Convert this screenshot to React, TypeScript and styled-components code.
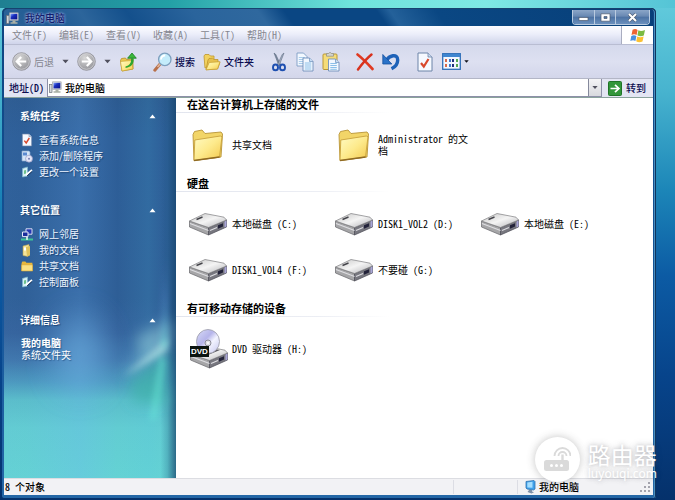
import React from "react";
import styled, { createGlobalStyle } from "styled-components";

const GlobalStyle = createGlobalStyle`
  * { box-sizing: border-box; }
  html, body { margin: 0; padding: 0; }
  body, button, input {
    font-family: "Noto Sans CJK SC", "Liberation Sans", sans-serif;
    font-size: 10px;
    line-height: 12px;
    color: #000;
  }
  button { border: 0; padding: 0; background: none; }
  svg { display: block; flex: none; }
  h1, h2, ul, p { margin: 0; padding: 0; font-size: inherit; list-style: none; }
`;

/* ---------- window frame ---------- */

const Desktop = styled.div`
  position: relative;
  min-height: 100vh;
  display: flex;
  padding: 8px 19px 2px 2px;
  background:
    linear-gradient(90deg, #1f7f92 0, #23a0a6 25%, #6fe3dc 52%, #7fe8e4 72%, #55c4d6 100%) 0 0 / 100% 8px no-repeat,
    linear-gradient(180deg, #62cbdc 0, #48b4cf 18%, #1c86b8 38%, #0c5ba4 55%, #07448b 75%, #05316b 100%);
`;

const WindowFrame = styled.div`
  flex: 1;
  min-width: 0;
  display: flex;
  flex-direction: column;
  padding: 0 3px 3px 2px;
  border-radius: 5px 5px 2px 2px;
  background: linear-gradient(180deg, #0e4480 0, #15559a 60%, #2467a6 100%);
  box-shadow: inset -1px 0 0 #10355f, inset 0 1px 0 #173a5e, inset -2px 0 0 #4a8fc0;
`;

const TitleBar = styled.header`
  height: 18px;
  display: flex;
  align-items: center;
  gap: 6px;
  padding: 1px 3px 0 2px;
  border-radius: 4px 4px 0 0;
  border-top: 1px solid #17426f;
  background: linear-gradient(
    55deg,
    #2d6397 0,
    #1f5a94 8%,
    #2c659b 13%,
    #14508c 20%,
    #2a649c 30%,
    #2f689e 40%,
    #0a4683 44%,
    #0a4683 58%,
    #24619a 60%,
    #0a4783 67%,
    #073f79 100%
  );
`;

const Title = styled.h1`
  flex: 1;
  font-weight: 500;
  color: #101c6c;
  text-shadow: 0 0 2px #a9b8e6, 0 0 3px #8fa6dc;
`;

const Controls = styled.div`
  align-self: flex-start;
  display: flex;
  border: 1px solid #b9cbe0;
  border-top: 0;
  border-radius: 0 0 4px 4px;
  overflow: hidden;
`;

const ControlButton = styled.button<{ $wide?: boolean }>`
  width: ${(p) => (p.$wide ? 34 : 21)}px;
  height: 14px;
  display: flex;
  align-items: center;
  justify-content: center;
  background: linear-gradient(180deg, #8ba6c8 0, #6888b2 45%, #4c72a3 50%, #6b90bd 100%);
  & + & { border-left: 1px solid #b9cbe0; }
`;

/* ---------- bars ---------- */

const MenuBar = styled.nav`
  height: 19px;
  display: flex;
  align-items: stretch;
  justify-content: space-between;
  border-bottom: 1px solid #b9bdd2;
  background: linear-gradient(180deg, #fcfcff 0, #eceefa 45%, #cfd4ea 100%);
`;

const MenuItems = styled.div`
  display: flex;
  padding-left: 2px;
`;

const MenuButton = styled.button`
  padding: 0 6px;
  color: #85868f;
`;

const LogoBox = styled.div`
  width: 32px;
  display: flex;
  align-items: center;
  justify-content: center;
  border-left: 1px solid #a9adc0;
  background: #fff;
`;

const Toolbar = styled.div`
  height: 34px;
  display: flex;
  align-items: center;
  gap: 16px;
  padding-left: 8px;
  border-bottom: 1px solid #b3b6c6;
  background: linear-gradient(180deg, #d5d9ec 0, #dde0f1 50%, #d3d6ea 100%);
`;

const ToolGroup = styled.div`
  display: flex;
  align-items: center;
  gap: 8px;
`;

const ToolButton = styled.button<{ $muted?: boolean }>`
  display: flex;
  align-items: center;
  gap: 3px;
  color: ${(p) => (p.$muted ? "#85868f" : "#0c0c50")};
  font-weight: ${(p) => (p.$muted ? 400 : 500)};
`;

const AddressBar = styled.form`
  height: 18px;
  display: flex;
  align-items: center;
  padding: 0 7px 0 5px;
  background: #e3e5f3;
`;

const AddressLabel = styled.label`
  margin-right: 3px;
  color: #0c0c50;
  font-weight: 500;
`;

const AddressBox = styled.div`
  flex: 1;
  align-self: stretch;
  min-width: 0;
  display: flex;
  align-items: center;
  gap: 3px;
  padding-left: 1px;
  border: 1px solid #8d90a8;
  border-width: 0 1px 1px 1px;
  background: #fff;
`;

const AddressInput = styled.input`
  flex: 1;
  min-width: 0;
  height: 16px;
  padding: 0;
  border: 0;
  outline: 0;
  background: transparent;
  font-weight: 500;
`;

const DropButton = styled.button`
  align-self: stretch;
  width: 13px;
  display: flex;
  align-items: center;
  justify-content: center;
  border-left: 1px solid #85899c;
  background: linear-gradient(180deg, #f4f4f6, #d8d9de);
`;

const GoButton = styled.button`
  display: flex;
  align-items: center;
  gap: 4px;
  margin-left: 6px;
  color: #0c0c50;
  font-weight: 500;
`;

/* ---------- body ---------- */

const Body = styled.div`
  flex: 1;
  display: flex;
  border-top: 1px solid #8aa29c;
  background: #fff;
`;

const Sidebar = styled.aside`
  position: relative;
  isolation: isolate;
  overflow: hidden;
  width: 172px;
  flex: none;
  padding: 8px 20px 20px 16px;
  color: #fff;
  background:
    linear-gradient(90deg, transparent 0, transparent 91%, rgba(30, 90, 130, 0.25) 95%, rgba(24, 70, 110, 0.75) 100%),
    linear-gradient(90deg, rgba(120, 180, 240, 0.04) 0, rgba(120, 180, 240, 0.02) 12%, rgba(110, 180, 250, 0.2) 44%, rgba(110, 180, 250, 0) 66%, rgba(80, 200, 230, 0.12) 84%, transparent 94%),
    linear-gradient(180deg, #2c5a90 0, #2d5e98 40px, #2e5e96 200px, #34629c 235px, #3f76ac 262px, #4b98be 284px, #5abdca 302px, #62ccd2 330px, #64d2d4 100%);
`;

const Aurora = styled.svg`
  position: absolute;
  z-index: -1;
  left: 0;
  top: 0;
`;

const TaskSection = styled.section`
  margin-bottom: 20px;
`;

const TaskHeading = styled.h2`
  height: 20px;
  display: flex;
  align-items: center;
  justify-content: space-between;
  font-weight: 700;
  text-shadow: 1px 1px 1px #1c4474;
`;

const TaskList = styled.ul`
  padding-top: 6px;
`;

const TaskLink = styled.a`
  height: 16px;
  display: flex;
  align-items: center;
  gap: 6px;
  padding-left: 1px;
  color: #eef5ff;
  text-decoration: none;
  text-shadow: 1px 1px 1px #1c4474;
`;

const Details = styled.div`
  padding: 7px 0 0 1px;
  text-shadow: 1px 1px 1px #2a5a8c;
`;

const DetailName = styled.p`
  font-weight: 700;
`;

const Content = styled.main`
  flex: 1;
  min-width: 0;
`;

const GroupHeading = styled.h2`
  height: 15px;
  padding-left: 11px;
  border-bottom: 1px solid;
  border-image: linear-gradient(90deg, #e2e5ee 0, #eceef4 30%, #fff 45%) 1;
  font-size: 11px;
  line-height: 12px;
  font-weight: 700;
`;

const ItemGrid = styled.div`
  display: grid;
  grid-template-columns: repeat(auto-fill, 146px);
  grid-auto-rows: 46px;
  padding: 9px 0 9px 12px;
`;

const Item = styled.button`
  display: flex;
  align-items: center;
  gap: 4px;
  text-align: left;
`;

const ItemIcon = styled.span`
  width: 40px;
  flex: none;
`;

const ItemLabel = styled.span`
  max-width: 92px;
`;

const Latin = styled.span`
  font-feature-settings: "hwid";
  white-space: pre;
`;

const StatusBar = styled.footer`
  height: 17px;
  display: flex;
  align-items: center;
  background: #f2f2f5;
  border-top: 1px solid #dcdde2;
`;

const StatusCell = styled.div<{ $width?: number }>`
  ${(p) => (p.$width ? `width: ${p.$width}px;` : "flex: 1;")}
  height: 14px;
  display: flex;
  align-items: center;
  gap: 3px;
  padding-left: ${(p) => (p.$width ? 6 : 1)}px;
  font-weight: 500;
  & + & { border-left: 1px solid #dcdde4; }
`;

const Grip = styled.span`
  margin: 0 3px 0 auto;
`;

const Watermark = styled.div`
  position: absolute;
  right: 18px;
  bottom: 18px;
  display: flex;
  align-items: center;
  gap: 8px;
  color: #fff;
  pointer-events: none;
  text-shadow: 0 0 4px rgba(70, 70, 80, 0.35), 0 0 9px rgba(70, 70, 80, 0.2);
`;

const Badge = styled.div`
  width: 45px;
  height: 45px;
  display: flex;
  align-items: center;
  justify-content: center;
  border-radius: 50%;
  background: #fff;
  box-shadow: 0 0 9px rgba(60, 60, 60, 0.3);
`;

const BrandName = styled.div`
  font-size: 23px;
  line-height: 28px;
`;

const BrandSite = styled.div`
  font-family: "Noto Sans", sans-serif;
  font-size: 12px;
  line-height: 12px;
`;

/* ---------- icons ---------- */

const SharedGradients = () => (
  <svg width="0" height="0" aria-hidden="true">
    <defs>
      <linearGradient id="folder" x1="0" y1="0" x2="1" y2="1">
        <stop offset="0" stopColor="#fffbc4" />
        <stop offset="0.5" stopColor="#fdea8c" />
        <stop offset="1" stopColor="#f3c84c" />
      </linearGradient>
      <linearGradient id="metal" x1="0" y1="0" x2="1" y2="1">
        <stop offset="0" stopColor="#c4c4c4" />
        <stop offset="0.5" stopColor="#f4f4f4" />
        <stop offset="1" stopColor="#b4b4b8" />
      </linearGradient>
      <radialGradient id="orb" cx="0.4" cy="0.3" r="0.8">
        <stop offset="0" stopColor="#d8d8d8" />
        <stop offset="1" stopColor="#8c8c92" />
      </radialGradient>
      <linearGradient id="disc" x1="0" y1="0" x2="1" y2="1">
        <stop offset="0" stopColor="#d9dcf6" />
        <stop offset="0.4" stopColor="#b5b4ea" />
        <stop offset="0.6" stopColor="#f3f4ff" />
        <stop offset="1" stopColor="#c4c6ee" />
      </linearGradient>
      <linearGradient id="screen" x1="0" y1="0" x2="1" y2="1">
        <stop offset="0" stopColor="#7fa4ff" />
        <stop offset="0.4" stopColor="#1a2fc0" />
        <stop offset="1" stopColor="#080c80" />
      </linearGradient>
    </defs>
  </svg>
);

const ComputerIcon = () => (
  <svg width="13" height="13" viewBox="0 0 13 13">
    <rect x="0.5" y="3.5" width="2.5" height="8" fill="#d4d8dc" stroke="#6a7078" strokeWidth="0.7" />
    <path d="M3.5 0.8h8.7v7.6H3.5z" fill="#dde0e4" stroke="#9ca2aa" strokeWidth="0.7" />
    <path d="M4.5 1.8h6.8v5.6H4.5z" fill="url(#screen)" />
    <path d="M6.5 8.6h3v1.6h2v1.6h-7v-1.6h2z" fill="#a9b0a6" />
  </svg>
);

const MyPlaceIcon = () => (
  <svg width="12" height="14" viewBox="0 0 12 14">
    <path d="M2 1.5l8-1 1 1v7.5l-1.5 1L3 9 2 8z" fill="#3fa0ea" stroke="#3172ae" strokeWidth="0.8" />
    <path d="M3.3 2.5l5.2-.7v6L3.3 7.6z" fill="#a5deff" />
    <path d="M5 10h3v1.5l2 .8-2.5 1.2L3.5 12z" fill="#7d90a8" />
  </svg>
);

const FlagIcon = () => (
  <svg width="16" height="15" viewBox="0 0 16 15">
    <path d="M2.6 1.8C4.5.7 6 .8 7.6 1.9L6.6 7C5 6 3.400 6 1.500 7z" fill="#ee6432" />
    <path d="M8.400 2.300c1.700 1 3.800 1 6.600-.3l-1.200 5.400c-2.300 1-4.400 1-6.400-.1z" fill="#7cbb42" />
    <path d="M1.300 7.900c1.900-1 3.500-1 5.100 0l-1 5C3.800 12 2.200 12 .3 13z" fill="#4a8fe0" />
    <path d="M7.200 8.400c2 1 4 1 6.400.1l-1.100 4.900c-2.300 1-4.400 1-6.300-.2z" fill="#fbc132" />
  </svg>
);

const OrbIcon = ({ forward }: { forward?: boolean }) => (
  <svg width="19" height="19" viewBox="0 0 19 19">
    <circle cx="9.500" cy="9.500" r="8.800" fill="url(#orb)" stroke="#8f8f96" strokeWidth="0.8" />
    <circle cx="9.500" cy="9.500" r="7.800" fill="none" stroke="#d8d8dc" strokeWidth="0.7" />
    <path
      d={forward ? "M4.800 9.500h9M9.800 5l4.400 4.500-4.400 4.500" : "M14.200 9.500h-9M9.200 5L4.800 9.500 9.200 14"}
      fill="none"
      stroke="#fff"
      strokeWidth="2.200"
    />
  </svg>
);

const Caret = ({ size = 7, color = "#50505e" }: { size?: number; color?: string }) => (
  <svg width={size} height="5" viewBox="0 0 8 5">
    <path d="M0.500 0.500h7L4 4.500z" fill={color} />
  </svg>
);

const FolderUpIcon = () => (
  <svg width="18" height="20" viewBox="0 0 18 20">
    <path d="M1.500 8.500l1-2 4-.5 1 1.500 6.500-.6V17l-11 2z" fill="#e9c750" stroke="#b68f24" strokeWidth="0.8" />
    <path d="M1.500 9.500l11-1L14 17 3 19z" fill="url(#folder)" stroke="#c49c2c" strokeWidth="0.6" />
    <path d="M6.500 14.500c4-1 6-3.500 5.500-8H14.600c.6 5-2 8.600-8 9.500z" fill="#2fa52f" />
    <path d="M8.600 6.200L13 1l4.300 5.200z" fill="#3bb83b" stroke="#167f1d" strokeWidth="0.8" />
  </svg>
);

const SearchIcon = () => (
  <svg width="19" height="20" viewBox="0 0 19 20">
    <path d="M7.500 11.500L1.800 18.200" stroke="#b8704a" strokeWidth="3" strokeLinecap="round" />
    <path d="M7.500 11.500L4.500 15" stroke="#e0b49a" strokeWidth="1.600" />
    <circle cx="11.800" cy="7.400" r="6.200" fill="#c4ecfb" stroke="#7d9fbe" strokeWidth="1.300" />
    <path d="M8 7.500c0-2.400 2-4.200 4.200-4" fill="none" stroke="#fff" strokeWidth="1.800" />
  </svg>
);

const FoldersIcon = () => (
  <svg width="18" height="18" viewBox="0 0 18 18">
    <path d="M1 3l1-1.500h4L7.500 3H11v9L2 15z" fill="#f2d260" stroke="#be962c" strokeWidth="0.800" />
    <path d="M5 7l1-1.500 3.500-.3L11 6.500h4V9l2 .3L14.500 16 3 16.800z" fill="#e6c04e" stroke="#be962c" strokeWidth="0.800" />
    <path d="M3 16.800L6.200 9.500 17 8.700 14.500 16z" fill="url(#folder)" stroke="#c89f30" strokeWidth="0.700" />
  </svg>
);

const CutIcon = () => (
  <svg width="18" height="20" viewBox="0 0 18 20">
    <path d="M4 1l1.800 1.500 4.700 10-1.700 1z" fill="#7c8ba0" stroke="#4e5c72" strokeWidth="0.500" />
    <path d="M14 1l-1.800 1.500-4.700 10 1.700 1z" fill="#a6b2c4" stroke="#4e5c72" strokeWidth="0.500" />
    <ellipse cx="5.500" cy="15.400" rx="2.500" ry="2.900" fill="none" stroke="#1d4fb0" strokeWidth="1.900" />
    <ellipse cx="12.500" cy="15.400" rx="2.500" ry="2.900" fill="none" stroke="#1d4fb0" strokeWidth="1.900" />
  </svg>
);

const CopyIcon = () => (
  <svg width="18" height="20" viewBox="0 0 18 20">
    <path d="M1 1h6.500L11 4.500V14H1z" fill="#f2f8ff" stroke="#7d9cc4" strokeWidth="0.900" />
    <path d="M2.800 5.500h6M2.800 7.500h6M2.800 9.500h6M2.800 11.500h6" stroke="#a9cdea" />
    <path d="M7 6h6.500L17 9.500V19H7z" fill="#f2f8ff" stroke="#6f8fba" strokeWidth="0.900" />
    <path d="M13.500 6v3.500H17" fill="#c4dcf4" stroke="#6f8fba" strokeWidth="0.700" />
    <path d="M8.800 11h6.500M8.800 13h6.500M8.800 15h6.500M8.800 17h6.500" stroke="#8cc0e8" />
  </svg>
);

const PasteIcon = () => (
  <svg width="18" height="20" viewBox="0 0 18 20">
    <rect x="1" y="2" width="14" height="15.500" rx="1" fill="#f5dc78" stroke="#b99736" />
    <path d="M4.500 1.500h2L8 .3l1.500 1.200h2v2.700h-7z" fill="#d4d4d0" stroke="#8c8c80" strokeWidth="0.700" />
    <path d="M6.500 7h7L17 10.500V19H6.500z" fill="#f2f8ff" stroke="#6f8fba" strokeWidth="0.900" />
    <path d="M13.500 7v3.500H17" fill="#c4dcf4" stroke="#6f8fba" strokeWidth="0.700" />
    <path d="M8.300 11.500h6.500M8.300 13.500h6.500M8.300 15.500h6.500M8.300 17.300h6.500" stroke="#8cc0e8" />
  </svg>
);

const DeleteIcon = () => (
  <svg width="18" height="18" viewBox="0 0 18 18">
    <path d="M1.500 1.500C6 5 11 10 16.500 16" fill="none" stroke="#e03a22" strokeWidth="2.600" strokeLinecap="round" />
    <path d="M15.500 1.500C10 6 6 11 2 16.500" fill="none" stroke="#d8321e" strokeWidth="2.400" strokeLinecap="round" />
  </svg>
);

const UndoIcon = () => (
  <svg width="18" height="19" viewBox="0 0 18 19">
    <path d="M4.500 8.500C7 3.500 15.500 1 15.700 8c0 4-2.500 7-6.200 8.800" fill="none" stroke="#1e62b8" strokeWidth="3.400" />
    <path d="M0.800 2.500V12h9z" fill="#2a72c8" stroke="#15509e" strokeWidth="0.800" />
  </svg>
);

const CheckPageIcon = ({ size = 18 }: { size?: number }) => (
  <svg width={size} height={size + 2} viewBox="0 0 18 20">
    <path d="M2 1h10l4 4v14H2z" fill="#f6f9ff" stroke="#6d84a8" />
    <path d="M12 1v4h4" fill="#cddcf0" stroke="#6d84a8" strokeWidth="0.800" />
    <path d="M5 11l2.800 3.500L12.500 7" fill="none" stroke="#d8482c" strokeWidth="2.200" />
  </svg>
);

const ViewsIcon = () => (
  <svg width="19" height="17" viewBox="0 0 19 17">
    <rect x="0.700" y="0.700" width="17.600" height="15.600" fill="#f2f7ff" stroke="#2f6fb8" strokeWidth="1.300" />
    <path d="M1 1h17v3H1z" fill="#3f86d0" />
    <path d="M3 6h2v3H3zM3 11h2v3H3z" fill="#d86a4a" />
    <path d="M7 6h2v3H7zM7 11h2v3H7z" fill="#3c78c8" />
    <path d="M10 6h2v3h-2zM10 11h2v3h-2z" fill="#20307c" />
    <path d="M14 6h2v3h-2zM14 11h2v3h-2z" fill="#54a852" />
  </svg>
);

const GoIcon = () => (
  <svg width="14" height="15" viewBox="0 0 14 15">
    <rect x="0.500" y="0.500" width="13" height="14" rx="1" fill="#32963a" stroke="#1f7428" />
    <path d="M2.500 7.500h8M7 3.800l3.900 3.700L7 11.200" fill="none" stroke="#fff" strokeWidth="1.700" />
  </svg>
);

const CollapseIcon = () => (
  <svg width="7" height="5" viewBox="0 0 7 5">
    <path d="M0.500 4.200L3.500 0.600l3 3.600z" fill="#fff" />
  </svg>
);

const ProgramsIcon = () => (
  <svg width="12" height="13" viewBox="0 0 12 13">
    <path d="M1 1h7l1 1v9H1z" fill="#d6e6f8" stroke="#86a4cc" strokeWidth="0.700" />
    <path d="M2 2.500h4v3H2z" fill="#5c8ad0" />
    <circle cx="8" cy="8.700" r="3.500" fill="#e4e6f8" stroke="#9a9cc4" strokeWidth="0.700" />
    <circle cx="8" cy="8.700" r="1" fill="#7c80b0" />
  </svg>
);

const SettingIcon = () => (
  <svg width="12" height="12" viewBox="0 0 12 12">
    <path d="M1.500 2.500l5-1.500v9l-5 1z" fill="#d4eef4" stroke="#7cb6cc" strokeWidth="0.700" />
    <path d="M3 4.500l2-.5v3.500l-2 .5z" fill="#6cc08c" />
    <path d="M5 9l6-5" stroke="#fff" strokeWidth="1.700" />
    <path d="M6 10l5-4.500" stroke="#1c3454" strokeWidth="0.900" />
  </svg>
);

const NetworkIcon = () => (
  <svg width="12" height="13" viewBox="0 0 12 13">
    <path d="M5 .8h6v5.400H5z" fill="#2438b4" stroke="#d8dcf0" />
    <path d="M1.500 4h5.500v4.600H1.500z" fill="#1a2c9c" stroke="#e4e8f8" />
    <path d="M0 11.500h12" stroke="#3ec498" strokeWidth="2" />
    <path d="M5 9h2v3H5z" fill="#bde6d8" />
  </svg>
);

const DocumentsIcon = () => (
  <svg width="12" height="13" viewBox="0 0 12 13">
    <path d="M2 2l6-1.500V10l-1 2.500-5-1z" fill="#f4e49a" stroke="#bca350" strokeWidth="0.600" />
    <path d="M5 3l4-1v9.500l-3 .8z" fill="#e0c25c" />
    <path d="M3 3.500h2v3H3z" fill="#fff" />
  </svg>
);

const SmallFolderIcon = () => (
  <svg width="12" height="12" viewBox="0 0 12 12">
    <path d="M.6 3l.8-1.500h3l1 1.300h6V11H.6z" fill="#e8b73c" />
    <path d="M.6 4.800h11V11H.6z" fill="#fbe184" stroke="#d6a530" strokeWidth="0.600" />
  </svg>
);

const FolderIcon = () => (
  <svg width="40" height="34" viewBox="0 0 40 34">
    <path d="M6 32.500L5 6.500 6.500 3.500 14 2l3 3.500L33 4l1.500 2-1.500 23z" fill="#f2d568" stroke="#b89438" strokeWidth="0.900" />
    <path d="M6 32.500L6.800 12l25.500-4 1.700.7L31.500 29z" fill="url(#folder)" stroke="#c8a23c" strokeWidth="0.900" />
    <path d="M6 32.500L31.500 29" stroke="#8f6a24" strokeWidth="1.300" />
  </svg>
);

const DriveBody = () => (
  <>
    <path d="M1.500 9l19 6.500V23l-19-8z" fill="#a6a6a8" stroke="#66666a" strokeWidth="0.700" />
    <path d="M20.500 15.500L38.500 8v7L20.500 23z" fill="#77777f" stroke="#4a4a54" strokeWidth="0.700" />
    <path d="M1.500 9L17 1.500l19 3.700 2.500 2.800-18 7.500z" fill="url(#metal)" stroke="#7c7c80" strokeWidth="0.700" />
    <path d="M2 11.500l18.500 7M22 18.500l7-3" stroke="#dedee2" strokeWidth="1.200" />
    <path d="M30 13.200l5-2v3.400l-5 2.100z" fill="#23233a" />
    <path d="M36.500 9.500l2-1v6l-2 1z" fill="#a9a6d8" />
  </>
);

const DriveIcon = () => (
  <svg width="40" height="24" viewBox="0 0 40 24">
    <DriveBody />
    <path d="M8.500 7.500l6-2.500" stroke="#44444a" strokeWidth="1.400" />
  </svg>
);

const DvdText = styled.text`
  font: 700 8px "Liberation Sans", sans-serif;
  fill: #fff;
`;

const DvdIcon = () => (
  <svg width="40" height="40" viewBox="0 0 40 40">
    <g transform="translate(1 16)">
      <DriveBody />
    </g>
    <path d="M8 24l12-5 12 2-12 5z" fill="#5c5c62" />
    <ellipse cx="20" cy="12.500" rx="11.500" ry="12" fill="url(#disc)" stroke="#9c9ca8" strokeWidth="0.800" />
    <circle cx="20" cy="14" r="3" fill="#dfe0ea" stroke="#8c8c98" />
    <circle cx="20" cy="14" r="1.100" fill="#fff" />
    <rect x="2" y="17" width="19" height="11" fill="#0b1410" />
    <DvdText x="3" y="25.400">DVD</DvdText>
  </svg>
);

const RouterIcon = () => (
  <svg width="28" height="28" viewBox="0 0 28 28">
    <rect x="1" y="14" width="25" height="11" rx="2.500" fill="#dadada" />
    <path d="M19.500 14V8.500" stroke="#dadada" strokeWidth="2.400" />
    <path d="M15.500 10a4 4 0 0 1 8 0M11.500 10a8 8 0 0 1 16 0" fill="none" stroke="#dadada" strokeWidth="1.800" />
    <circle cx="8.500" cy="19.500" r="1.500" fill="#fff" />
    <circle cx="13.500" cy="19.500" r="1.500" fill="#fff" />
    <circle cx="18.500" cy="19.500" r="1.500" fill="#fff" />
  </svg>
);

const AuroraArt = () => (
  <Aurora width="172" height="380" viewBox="0 0 172 380" aria-hidden="true">
    <defs>
      <filter id="soft" x="-80%" y="-80%" width="260%" height="260%">
        <feGaussianBlur stdDeviation="7" />
      </filter>
      <filter id="softer" x="-150%" y="-100%" width="400%" height="300%">
        <feGaussianBlur stdDeviation="16" />
      </filter>
      <filter id="fine" x="-80%" y="-80%" width="260%" height="260%">
        <feGaussianBlur stdDeviation="3" />
      </filter>
      <linearGradient id="beam" x1="0" y1="0" x2="0" y2="1">
        <stop offset="0" stopColor="#7ab4ff" stopOpacity="0" />
        <stop offset="0.5" stopColor="#7ab4ff" stopOpacity="0.4" />
        <stop offset="1" stopColor="#6cf0dc" stopOpacity="0.5" />
      </linearGradient>
    </defs>
    <ellipse cx="76" cy="255" rx="22" ry="36" fill="#6fb4e2" opacity="0.6" filter="url(#softer)" />
    <path d="M165 250L124 284 130 305 162 305z" fill="#3fb4a8" opacity="0.7" filter="url(#soft)" />
    <path d="M168 222L132 238 136 256 116 280 166 248z" fill="#9fdbe0" opacity="0.5" filter="url(#soft)" />
    <path d="M164 240L120 278 162 254z" fill="#c4f2ee" opacity="0.6" filter="url(#fine)" />
    <path d="M162 150L157 250 163 250z" fill="url(#beam)" filter="url(#fine)" />
    <path d="M156 256L146 322 152 322 162 262z" fill="#6cf0dc" opacity="0.5" filter="url(#fine)" />
  </Aurora>
);

/* ---------- page ---------- */

/** Sets Latin runs in half-width forms so that two letters line up with one CJK character. */
const Mixed = ({ text }: { text: string }) => (
  <>
    {text.split(/([\x20-\x7e]+)/).map((run, i) => (i % 2 ? <Latin key={i}>{run}</Latin> : run))}
  </>
);

const menus = ["文件(F)", "编辑(E)", "查看(V)", "收藏(A)", "工具(T)", "帮助(H)"];

const systemTasks = [
  { icon: <CheckPageIcon size={12} />, text: "查看系统信息" },
  { icon: <ProgramsIcon />, text: "添加/删除程序" },
  { icon: <SettingIcon />, text: "更改一个设置" },
];

const otherPlaces = [
  { icon: <NetworkIcon />, text: "网上邻居" },
  { icon: <DocumentsIcon />, text: "我的文档" },
  { icon: <SmallFolderIcon />, text: "共享文档" },
  { icon: <SettingIcon />, text: "控制面板" },
];

const groups = [
  { title: "在这台计算机上存储的文件", icon: <FolderIcon />, items: ["共享文档", "Administrator 的文档"] },
  {
    title: "硬盘",
    icon: <DriveIcon />,
    items: ["本地磁盘 (C:)", "DISK1_VOL2 (D:)", "本地磁盘 (E:)", "DISK1_VOL4 (F:)", "不要碰 (G:)"],
  },
  { title: "有可移动存储的设备", icon: <DvdIcon />, items: ["DVD 驱动器 (H:)"] },
];

const Tasks = ({ title, links }: { title: string; links: { icon: React.ReactNode; text: string }[] }) => (
  <TaskSection>
    <TaskHeading>
      {title}
      <button type="button" aria-label={title}>
        <CollapseIcon />
      </button>
    </TaskHeading>
    <TaskList>
      {links.map((l) => (
        <li key={l.text}>
          <TaskLink href="#">
            {l.icon}
            {l.text}
          </TaskLink>
        </li>
      ))}
    </TaskList>
  </TaskSection>
);

export default function App() {
  return (
    <Desktop>
      <GlobalStyle />
      <WindowFrame>
        <TitleBar>
          <ComputerIcon />
          <Title>我的电脑</Title>
          <Controls>
            <ControlButton aria-label="最小化">
              <svg width="11" height="9" viewBox="0 0 11 9">
                <rect x="1" y="4.500" width="9" height="3" fill="#fff" stroke="#4c5a70" strokeWidth="0.700" />
              </svg>
            </ControlButton>
            <ControlButton aria-label="最大化">
              <svg width="11" height="9" viewBox="0 0 11 9">
                <path d="M1 .8h9v7.400H1zM4 3.500v2h3v-2z" fillRule="evenodd" fill="#fff" stroke="#4c5a70" strokeWidth="0.700" />
              </svg>
            </ControlButton>
            <ControlButton $wide aria-label="关闭">
              <svg width="11" height="9" viewBox="0 0 11 9">
                <path d="M2 1l7 7M9 1L2 8" stroke="#4c5a70" strokeWidth="3.200" />
                <path d="M2 1l7 7M9 1L2 8" stroke="#fff" strokeWidth="2" />
              </svg>
            </ControlButton>
          </Controls>
        </TitleBar>

        <MenuBar>
          <MenuItems>
            {menus.map((m) => (
              <MenuButton key={m}>
                <Mixed text={m} />
              </MenuButton>
            ))}
          </MenuItems>
          <LogoBox>
            <FlagIcon />
          </LogoBox>
        </MenuBar>

        <Toolbar>
          <ToolGroup>
            <ToolButton $muted>
              <OrbIcon />
              后退
            </ToolButton>
            <button aria-label="后退列表"><Caret /></button>
            <ToolButton aria-label="前进"><OrbIcon forward /></ToolButton>
            <button aria-label="前进列表"><Caret /></button>
            <ToolButton aria-label="向上"><FolderUpIcon /></ToolButton>
          </ToolGroup>
          <ToolGroup>
            <ToolButton>
              <SearchIcon />
              搜索
            </ToolButton>
            <ToolButton>
              <FoldersIcon />
              文件夹
            </ToolButton>
          </ToolGroup>
          <ToolGroup>
            <ToolButton aria-label="剪切"><CutIcon /></ToolButton>
            <ToolButton aria-label="复制"><CopyIcon /></ToolButton>
            <ToolButton aria-label="粘贴"><PasteIcon /></ToolButton>
          </ToolGroup>
          <ToolGroup>
            <ToolButton aria-label="删除"><DeleteIcon /></ToolButton>
            <ToolButton aria-label="撤消"><UndoIcon /></ToolButton>
          </ToolGroup>
          <ToolGroup>
            <ToolButton aria-label="属性"><CheckPageIcon /></ToolButton>
            <ToolButton aria-label="查看">
              <ViewsIcon />
              <Caret size={5} color="#101018" />
            </ToolButton>
          </ToolGroup>
        </Toolbar>

        <AddressBar onSubmit={(e) => e.preventDefault()}>
          <AddressLabel htmlFor="address">
            <Mixed text="地址(D)" />
          </AddressLabel>
          <AddressBox>
            <ComputerIcon />
            <AddressInput id="address" defaultValue="我的电脑" />
            <DropButton type="button" aria-label="地址列表">
              <Caret size={6} />
            </DropButton>
          </AddressBox>
          <GoButton>
            <GoIcon />
            转到
          </GoButton>
        </AddressBar>

        <Body>
          <Sidebar>
            <AuroraArt />
            <Tasks title="系统任务" links={systemTasks} />
            <Tasks title="其它位置" links={otherPlaces} />
            <TaskHeading>
              详细信息
              <button aria-label="详细信息">
                <CollapseIcon />
              </button>
            </TaskHeading>
            <Details>
              <DetailName>我的电脑</DetailName>
              <p>系统文件夹</p>
            </Details>
          </Sidebar>
          <Content>
            {groups.map((g) => (
              <section key={g.title}>
                <GroupHeading>{g.title}</GroupHeading>
                <ItemGrid>
                  {g.items.map((name) => (
                    <Item key={name}>
                      <ItemIcon>{g.icon}</ItemIcon>
                      <ItemLabel>
                        <Mixed text={name} />
                      </ItemLabel>
                    </Item>
                  ))}
                </ItemGrid>
              </section>
            ))}
          </Content>
        </Body>

        <StatusBar>
          <StatusCell>
            <span>
              <Mixed text="8 个对象" />
            </span>
          </StatusCell>
          <StatusCell $width={64} />
          <StatusCell $width={136}>
            <MyPlaceIcon />
            我的电脑
            <Grip>
              <svg width="10" height="10" viewBox="0 0 10 10">
                <path
                  d="M8 0h2v2H8zM8 4h2v2H8zM4 4h2v2H4zM8 8h2v2H8zM4 8h2v2H4zM0 8h2v2H0z"
                  fill="#a4a4ae"
                />
              </svg>
            </Grip>
          </StatusCell>
        </StatusBar>
      </WindowFrame>

      <Watermark>
        <Badge>
          <RouterIcon />
        </Badge>
        <div>
          <BrandName>路由器</BrandName>
          <BrandSite>luyouqi.com</BrandSite>
        </div>
      </Watermark>
      <SharedGradients />
    </Desktop>
  );
}
